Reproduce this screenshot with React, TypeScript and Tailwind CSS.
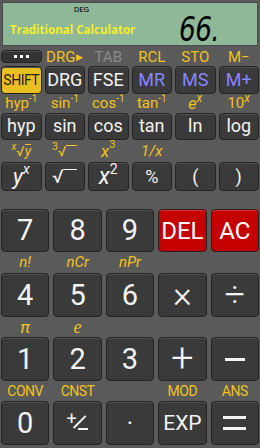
import React from "react";

const font = { fontFamily: "Roboto, 'Noto Sans', sans-serif" };

function Key({
  children,
  className = "",
}: {
  children: React.ReactNode;
  className?: string;
}) {
  return (
    <div
      className={`flex items-center justify-center rounded-[4px] border border-[#242424] shadow-[inset_0_1px_0_#505050] leading-none ${className}`}
    >
      {children}
    </div>
  );
}

function Label({
  children,
  className = "",
  gray = false,
}: {
  children?: React.ReactNode;
  className?: string;
  gray?: boolean;
}) {
  return (
    <div
      className={`flex items-center justify-center leading-none ${gray ? "text-[#8a8a8a]" : "text-[#f2c21c]"} ${className}`}
    >
      {children}
    </div>
  );
}

const dark = "bg-[#3a3a3a] text-[#f2f2f2]";

export default function App() {
  return (
    <div className="w-[260px] h-[448px] bg-[#5a5a5a] overflow-hidden select-none" style={font}>
      {/* Display */}
      <div className="mx-[2px] pt-[2px]">
        <div className="h-[44px] bg-[#8eb898] border border-[#4a4a4a] flex flex-col">
          <div className="h-[13px] pl-[71px] pt-[3px] text-[8px] leading-none text-black">DEG</div>
          <div className="h-[28px] flex items-center justify-between pl-[7px] pr-[38px]">
            <span className="text-[11.5px] font-bold text-[#f5ef2a]" style={{ fontFamily: "'Open Sans', sans-serif" }}>
              Traditional Calculator
            </span>
            <span
              className="text-[33px] leading-[28px] italic text-black tracking-tight inline-block scale-x-[0.8] origin-right"
              style={{ fontFamily: "'DejaVu Sans', sans-serif", fontWeight: 300 }}
            >
              66.
            </span>
          </div>
        </div>
      </div>

      {/* Scientific section */}
      <div className="px-[1px] mt-[4px]">
        <div className="grid grid-cols-6 gap-x-[3px] h-[14px]">
          <Key className="h-[13px] bg-[#333] border-[#1e1e1e]">
            <div className="flex gap-[3px]">
              <div className="w-[3px] h-[3px] bg-white" />
              <div className="w-[3px] h-[3px] bg-white" />
              <div className="w-[3px] h-[3px] bg-white" />
            </div>
          </Key>
          <Label className="text-[15px]">
            DRG<span className="text-[9px] ml-[1px]">▶</span>
          </Label>
          <Label gray className="text-[15px]">TAB</Label>
          <Label className="text-[15px]">RCL</Label>
          <Label className="text-[15px]">STO</Label>
          <Label className="text-[15px]">M−</Label>
        </div>
        <div className="grid grid-cols-6 gap-x-[3px] h-[28px] mt-[2px]">
          <Key className="bg-[#e9bf22] text-[#1e1e1e] text-[14px] tracking-[-0.5px] border-[#7a6010]">SHIFT</Key>
          <Key className={`${dark} text-[18px]`}>DRG</Key>
          <Key className={`${dark} text-[18px]`}>FSE</Key>
          <Key className="bg-[#3a3a3a] text-[#8585ff] text-[18px]">MR</Key>
          <Key className="bg-[#3a3a3a] text-[#8585ff] text-[18px]">MS</Key>
          <Key className="bg-[#3a3a3a] text-[#8585ff] text-[18px]">M+</Key>
        </div>
        <div className="grid grid-cols-6 gap-x-[3px] h-[19px]">
          <Label className="text-[15px]">
            hyp<sup className="text-[10px] top-[-5px]">-1</sup>
          </Label>
          <Label className="text-[15px]">
            sin<sup className="text-[10px] top-[-5px]">-1</sup>
          </Label>
          <Label className="text-[15px]">
            cos<sup className="text-[10px] top-[-5px]">-1</sup>
          </Label>
          <Label className="text-[15px]">
            tan<sup className="text-[10px] top-[-5px]">-1</sup>
          </Label>
          <Label className="text-[16px]">
            <i>e</i>
            <sup className="text-[12px] top-[-6px] italic">x</sup>
          </Label>
          <Label className="text-[15px]">
            10<sup className="text-[12px] top-[-6px] italic">x</sup>
          </Label>
        </div>
        <div className="grid grid-cols-6 gap-x-[3px] h-[27px]">
          {["hyp", "sin", "cos", "tan", "ln", "log"].map((t) => (
            <Key key={t} className={`${dark} text-[18px] pb-[2px]`}>
              {t}
            </Key>
          ))}
        </div>
        <div className="grid grid-cols-6 gap-x-[3px] h-[22px]">
          <Label className="italic text-[14px]">
            <span className="text-[10px] relative top-[-4px]">x</span>
            <span className="not-italic">√</span>
            <span className="border-t border-[#f2c21c] leading-[13px]">y</span>
          </Label>
          <Label className="text-[14px]">
            <span className="text-[10px] relative top-[-4px]">3</span>
            <span>√</span>
            <span className="border-t border-[#f2c21c] w-[11px] h-[13px] mt-[1px]" />
          </Label>
          <Label className="text-[17px]">
            <i>x</i>
            <sup className="text-[11px] top-[-6px]">3</sup>
          </Label>
          <Label className="italic text-[15px]">1/x</Label>
          <Label />
          <Label />
        </div>
        <div className="grid grid-cols-6 gap-x-[3px] h-[29px]">
          <Key className={`${dark} text-[22px]`}>
            <i>y</i>
            <sup className="text-[14px] top-[-8px] italic">x</sup>
          </Key>
          <Key className={`${dark} text-[19px]`}>
            <span>√</span>
            <span className="border-t-[1.5px] border-[#f2f2f2] w-[14px] h-[15px]" />
          </Key>
          <Key className={`${dark} text-[23px]`}>
            <i>x</i>
            <sup className="text-[14px] top-[-8px]">2</sup>
          </Key>
          <Key className={`${dark} text-[18px]`}>%</Key>
          <Key className={`${dark} text-[18px]`}>(</Key>
          <Key className={`${dark} text-[18px]`}>)</Key>
        </div>
      </div>

      {/* Number section */}
      <div className="px-[1px] mt-[18px]">
        <div className="grid grid-cols-5 gap-x-[4px] h-[43px]">
          <Key className={`${dark} text-[29px]`}>7</Key>
          <Key className={`${dark} text-[29px]`}>8</Key>
          <Key className={`${dark} text-[29px]`}>9</Key>
          <Key className="bg-[#c50000] text-white text-[24px] border-[#6a0000] shadow-[inset_0_1px_0_#e03030]">DEL</Key>
          <Key className="bg-[#c50000] text-white text-[24px] border-[#6a0000] shadow-[inset_0_1px_0_#e03030]">AC</Key>
        </div>
        <div className="grid grid-cols-5 gap-x-[4px] h-[21px]">
          <Label className="italic text-[15px]">n!</Label>
          <Label className="italic text-[15px]">nCr</Label>
          <Label className="italic text-[15px]">nPr</Label>
          <Label />
          <Label />
        </div>
        <div className="grid grid-cols-5 gap-x-[4px] h-[44px]">
          <Key className={`${dark} text-[29px]`}>4</Key>
          <Key className={`${dark} text-[29px]`}>5</Key>
          <Key className={`${dark} text-[29px]`}>6</Key>
          <Key className={`${dark} text-[36px] font-light`}>×</Key>
          <Key className={`${dark} text-[36px] font-light`}>÷</Key>
        </div>
        <div className="grid grid-cols-5 gap-x-[4px] h-[20px]">
          <Label className="italic text-[17px]">π</Label>
          <Label className="italic text-[18px]">
            <span style={{ fontFamily: "'Liberation Serif', serif" }}>e</span>
          </Label>
          <Label />
          <Label />
          <Label />
        </div>
        <div className="grid grid-cols-5 gap-x-[4px] h-[44px]">
          <Key className={`${dark} text-[29px]`}>1</Key>
          <Key className={`${dark} text-[29px]`}>2</Key>
          <Key className={`${dark} text-[29px]`}>3</Key>
          <Key className={`${dark} text-[40px] font-light`}>+</Key>
          <Key className={`${dark}`}>
            <div className="w-[20px] h-[3px] bg-[#f2f2f2]" />
          </Key>
        </div>
        <div className="grid grid-cols-5 gap-x-[4px] h-[20px]">
          <Label className="text-[14px] tracking-[-0.5px]">CONV</Label>
          <Label className="text-[14px] tracking-[-0.5px]">CNST</Label>
          <Label />
          <Label className="text-[14px] tracking-[-0.5px]">MOD</Label>
          <Label className="text-[14px] tracking-[-0.5px]">ANS</Label>
        </div>
        <div className="grid grid-cols-5 gap-x-[4px] h-[44px]">
          <Key className={`${dark} text-[29px]`}>0</Key>
          <Key className={`${dark}`}>
            <div className="relative w-[24px] h-[24px]">
              <span className="absolute left-[1px] top-[-1px] text-[18px] leading-none">+</span>
              <span className="absolute left-[5px] top-[10px] w-[17px] h-[1.5px] bg-[#f2f2f2] -rotate-45" />
              <div className="absolute left-[12px] top-[17px] w-[10px] h-[2px] bg-[#f2f2f2]" />
            </div>
          </Key>
          <Key className={`${dark} text-[24px]`}>·</Key>
          <Key className={`${dark} text-[21px]`}>EXP</Key>
          <Key className={`${dark}`}>
            <div className="flex flex-col gap-[8px]">
              <div className="w-[23px] h-[3px] bg-[#f2f2f2]" />
              <div className="w-[23px] h-[3px] bg-[#f2f2f2]" />
            </div>
          </Key>
        </div>
      </div>
    </div>
  );
}
